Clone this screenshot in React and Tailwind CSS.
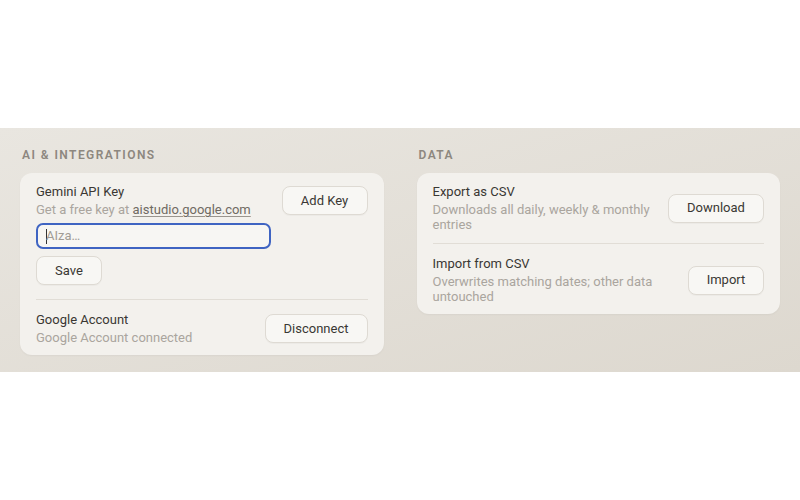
const FONT = { fontFamily: 'Roboto, Inter, "Noto Sans", sans-serif' };

function Btn({ children, className = '' }) {
  return (
    <button
      className={`h-[29px] shrink-0 rounded-[8px] border border-[#dedad3] bg-[#f8f7f4] text-[13px] text-[#3a3733] shadow-[0_1px_1px_rgba(0,0,0,0.03)] ${className}`}
    >
      {children}
    </button>
  );
}

function Heading({ children }) {
  return (
    <div className="mb-[10px] pl-[2px] text-[12px] leading-[16px] font-semibold tracking-[0.12em] text-[#8d877f]">
      {children}
    </div>
  );
}

function Row({ title, sub, subWidth, button, className = '' }) {
  return (
    <div className={`flex items-center justify-between ${className}`}>
      <div style={subWidth ? { width: subWidth } : undefined}>
        <div className="text-[13px] leading-[16px] text-[#3a3733]">{title}</div>
        <div className="mt-[2px] text-[13px] leading-[15px] text-[#aaa59e]">{sub}</div>
      </div>
      {button}
    </div>
  );
}

export default function App() {
  return (
    <div className="min-h-[500px] bg-white" style={FONT}>
      <div className="h-[128px]" />
      <div className="h-[244px] bg-gradient-to-br from-[#e9e6e0] to-[#ddd8cf] px-[20px] pt-[19px]">
        <div className="grid grid-cols-2 gap-[33px]">
          <section>
            <Heading>AI &amp; INTEGRATIONS</Heading>
            <div className="rounded-[12px] bg-[#f3f1ed] px-4 pt-[11px] pb-[10px] shadow-[0_1px_2px_rgba(0,0,0,0.04)]">
              <div className="flex items-start justify-between pb-[14px]">
                <div>
                  <div className="text-[13px] leading-[16px] text-[#3a3733]">Gemini API Key</div>
                  <div className="mt-[2px] text-[13px] leading-[15px] text-[#aaa59e]">
                    Get a free key at{' '}
                    <span className="text-[#6f6a63] underline decoration-[#9a958e] underline-offset-2">aistudio.google.com</span>
                  </div>
                  <div className="mt-[6px] flex h-[26px] w-[235px] items-center rounded-[7px] border-2 border-[#3f64c2] bg-[#f7f6f3] pl-[8px]">
                    <span className="h-[15px] w-px bg-[#333]" />
                    <span className="-ml-px text-[13px] text-[#a19c95]">AIza…</span>
                  </div>
                  <Btn className="mt-[7px] w-[66px] h-[28px]">Save</Btn>
                </div>
                <Btn className="mt-[2px] w-[86px]">Add Key</Btn>
              </div>
              <div className="h-px bg-[#e1ddd6]" />
              <Row
                className="pt-[12px]"
                title="Google Account"
                sub="Google Account connected"
                button={<Btn className="w-[103px]">Disconnect</Btn>}
              />
            </div>
          </section>
          <section>
            <Heading>DATA</Heading>
            <div className="rounded-[12px] bg-[#f3f1ed] px-4 pt-[11px] pb-[10px] shadow-[0_1px_2px_rgba(0,0,0,0.04)]">
              <Row
                className="pb-[11px]"
                title="Export as CSV"
                sub="Downloads all daily, weekly & monthly entries"
                subWidth={228}
                button={<Btn className="w-[96px]">Download</Btn>}
              />
              <div className="h-px bg-[#e1ddd6]" />
              <Row
                className="pt-[12px]"
                title="Import from CSV"
                sub="Overwrites matching dates; other data untouched"
                subWidth={232}
                button={<Btn className="w-[76px]">Import</Btn>}
              />
            </div>
          </section>
        </div>
      </div>
    </div>
  );
}
